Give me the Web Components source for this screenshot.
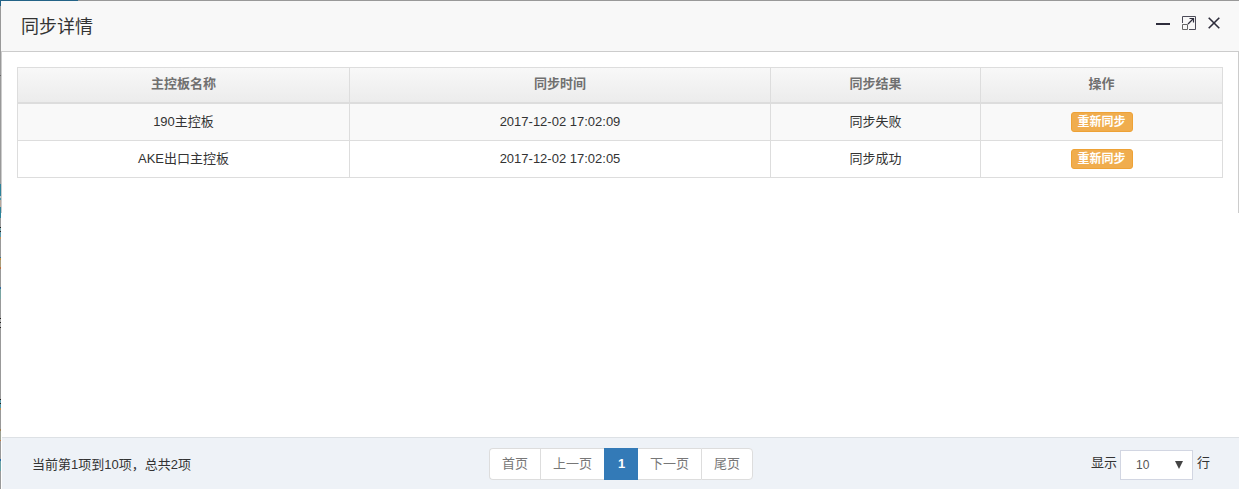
<!DOCTYPE html>
<html lang="zh-CN">
<head>
<meta charset="utf-8">
<title>同步详情</title>
<style>
html,body{margin:0;height:100%;overflow:hidden}
body{font:13px "Liberation Sans","Noto Sans CJK SC",sans-serif;color:#333;background:#999}
</style>
</head>
<body>
<sync-dialog></sync-dialog>
<script>
const define = (name, html, setup) => customElements.define(name, class extends HTMLElement {
  connectedCallback() {
    if (this.shadowRoot) return;
    this.attachShadow({mode: 'open'}).innerHTML = html;
    if (setup) setup(this, this.shadowRoot);
  }
});

define('backdrop-edge', `<style>
:host{display:block;width:1px;background:linear-gradient(#236387 0 6px,#999 6px 75px,#666 75px 76px,#999 76px 184px,#2c8299 184px 196px,#b8c4c8 196px 198px,#4c96a8 198px 200px,#b9a89b 200px 207px,#2c8299 207px 218px,#999 218px 227px,#222 227px 228px,#7ca3a8 228px 231px,#222 231px 232px,#5d98a8 232px 237px,#c79055 237px 239px,#999 239px 257px,#347996 257px 258px,#c18a3e 258px 260px,#a99d7c 260px 267px,#c06f3d 267px 269px,#999 269px 287px,#306da0 287px 289px,#79a5a2 289px 299px,#999 299px 318px,#222 318px 319px,#aaa 319px 322px,#222 322px 323px,#aaa 323px 327px,#222 327px 328px,#999 328px 399px,#222 399px 400px,#5b9baa 400px 403px,#222 403px 404px,#5299a8 404px 408px,#c58b48 408px 410px,#999 410px 429px,#9d7d54 429px 431px,#9ba093 431px 440px,#c3763b 440px 441px,#999 441px 459px,#2769a5 459px 461px,#6aa2a6 461px 471px,#999 471px)}
</style>`);

define('title-bar', `<style>
:host{display:flex;box-sizing:border-box;height:51px;border-bottom:1px solid #ccc;background:#f8f8f8;align-items:flex-start;justify-content:space-between;padding:0 18px 0 20px}
.title{font-size:18px;line-height:52px;height:50px}
.tools{display:flex;gap:10px;padding-top:14px}
svg{display:block}
</style><div class="title"><slot></slot></div>
<div class="tools">
<svg width="16" height="16" viewBox="0 0 16 16"><path d="M1 8h14v2H1z" fill="#2e2d3c"/></svg>
<svg width="16" height="16" viewBox="0 0 16 16" fill="none" stroke="#4c4b58"><path d="M1.5 8V1.5h13v13H8"/><path d="M7 9l5.5-5.5" stroke="#2e2d3c" stroke-width="1.3"/><path d="M8.5 3.5h4v4" stroke="#2e2d3c" stroke-width="1.2"/><path d="M1.5 9.5h5v5h-5z" stroke="#666"/></svg>
<svg width="14" height="16" viewBox="0 0 14 16" fill="none" stroke="#2e2d3c" stroke-width="1.6"><path d="M1.7 2.7l10.6 10.6M12.3 2.7 1.7 13.3"/></svg>
</div>`);

define('resync-button', `<style>
:host{display:inline-block;vertical-align:top;box-sizing:border-box;width:62px;height:20px;border:1px solid #eea236;border-radius:3px;background:#f0ad4e;color:#fff;font-size:12px;font-weight:700;line-height:19px;text-align:center;margin-top:8px}
</style><slot></slot>`);

define('data-cell', `<style>
:host{display:block;box-sizing:border-box;height:100%;border-right:1px solid #ddd;text-align:center;line-height:35px;white-space:nowrap}
</style><slot></slot>`);

define('data-row', `<style>
:host{display:grid;grid-template-columns:332px 421px 210px 242px;height:36px;border-bottom:1px solid #ddd;background:#fff}
:host([striped]){background:#f9f9f9}
:host([head]){height:34px;border-bottom-width:2px;background:linear-gradient(#f8f8f8,#ececec);color:#707070;font-weight:700}
</style><slot></slot>`);

define('data-table', `<style>
:host{display:block;width:1205px;border:1px solid #ddd;border-width:1px 0 0 1px}
</style><slot></slot>`);

define('page-link', `<style>
:host{display:block;box-sizing:border-box;height:32px;border:1px solid #ddd;border-right:0;background:#fff;color:#777;text-align:center;line-height:29px}
:host([first]){border-radius:4px 0 0 4px}
:host([last]){border-right:1px solid #ddd;border-radius:0 4px 4px 0}
:host([active]){border-color:#337ab7;background:#337ab7;color:#fff;font-weight:700}
</style><slot></slot>`);

define('page-nav', `<style>
:host{display:grid;grid-template-columns:51px 64px 34px 63px 52px;margin-top:10px}
</style>
<page-link first>首页</page-link><page-link>上一页</page-link><page-link active>1</page-link><page-link style="border-left:0">下一页</page-link><page-link last>尾页</page-link>`);

define('page-size', `<style>
:host{display:flex;justify-content:flex-end;line-height:30px;padding:12px 29px 0 0}
.label{margin-top:-2px}
.box{display:flex;box-sizing:border-box;width:73px;height:30px;margin:0 4px 0 3px;border:1px solid #d2d6e2;background:#fff;color:#555;font-size:12px;line-height:29px;justify-content:space-between;padding:0 8px 0 15px}
svg{margin-top:9px}
</style><span class="label">显示</span><div class="box"><span>10</span><svg width="10" height="9"><path d="M1 1h8L5 9z" fill="#444"/></svg></div><span class="label">行</span>`);

define('footer-bar', `<style>
:host{display:grid;grid-template-columns:487px 264px 1fr;box-sizing:border-box;height:52px;border-top:1px solid #dde1e5;background:#eef2f7}
.info{padding-left:30px;line-height:54px}
</style><div class="info"><slot></slot></div><page-nav></page-nav><page-size></page-size>`);

define('sync-dialog', `<style>
:host{display:grid;grid-template-columns:1px 1fr;width:1239px;height:489px;background:linear-gradient(90deg,#236387 78px,#999 78px)}
.panel{display:flex;flex-direction:column;margin-top:1px;background:#fff;min-width:0}
backdrop-edge{height:489px}
main{flex:1;padding:15px 15px 0;border:0 solid;border-width:0 1px;border-image:linear-gradient(#ccc 0 161px,transparent 161px) 1}
footer-bar{margin-left:1px}
data-row[head] data-cell{line-height:32px}
</style>
<backdrop-edge></backdrop-edge>
<div class="panel">
<title-bar>同步详情</title-bar>
<main><data-table>
<data-row head><data-cell>主控板名称</data-cell><data-cell>同步时间</data-cell><data-cell>同步结果</data-cell><data-cell>操作</data-cell></data-row>
<data-row striped><data-cell>190主控板</data-cell><data-cell>2017-12-02 17:02:09</data-cell><data-cell>同步失败</data-cell><data-cell><resync-button>重新同步</resync-button></data-cell></data-row>
<data-row><data-cell>AKE出口主控板</data-cell><data-cell>2017-12-02 17:02:05</data-cell><data-cell>同步成功</data-cell><data-cell><resync-button>重新同步</resync-button></data-cell></data-row>
</data-table></main>
<footer-bar>当前第1项到10项，总共2项</footer-bar>
</div>`);
</script>
</body>
</html>
